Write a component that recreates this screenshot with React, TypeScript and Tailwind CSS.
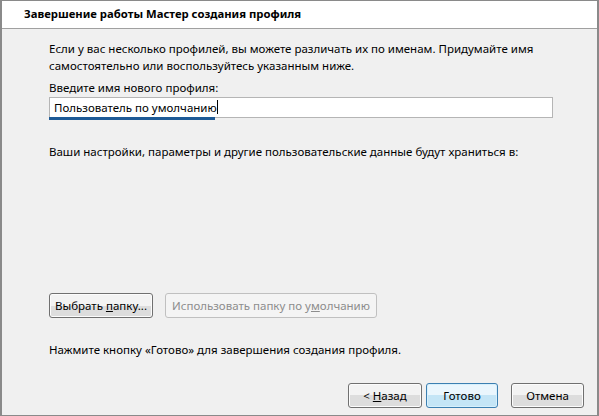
export default function App() {
  const font = { fontFamily: '"Noto Sans", "Open Sans", sans-serif' };
  const btn =
    "h-[25px] rounded-[3px] border border-[#707070] bg-gradient-to-b from-[#f3f3f3] from-50% to-[#dddddd] to-50% shadow-[inset_0_0_0_1px_#fcfcfc]";
  return (
    <div
      className="flex h-[416px] w-[599px] flex-col border-x-2 border-y border-[#8a8a8a] bg-[#f0f0f0] text-[11.5px] text-black"
      style={font}
    >
      <div className="flex h-[28px] shrink-0 items-center border-b border-[#a0a0a0] bg-white pl-[22px] text-[11.3px] font-bold">
        Завершение работы Мастер создания профиля
      </div>
      <div className="flex flex-1 flex-col pl-[47px] pr-[13px] pt-[11px]">
        <p className="whitespace-nowrap leading-[17px]">
          Если у вас несколько профилей, вы можете различать их по именам. Придумайте имя
          <br />
          самостоятельно или воспользуйтесь указанным ниже.
        </p>
        <p className="mt-[5px] leading-[17px]">
          Вве<span className="underline">д</span>ите имя нового профиля:
        </p>
        <div className="relative mt-px h-[21px] w-[504px] border border-[#b5b5b5] bg-white pl-[4px] leading-[19px]">
          Пользователь по умолчанию<span className="inline-block h-[14px] w-px translate-y-[2px] bg-black" />
          <div className="absolute -bottom-[3px] -left-px h-[3px] w-[166px] bg-[#1e5a96]" />
        </div>
        <p className="mt-[25px] leading-[17px]">
          Ваши настройки, параметры и другие пользовательские данные будут храниться в:
        </p>
        <div className="mt-[133px] flex gap-[12px]">
          <button className={`${btn} w-[104px]`}>
            Выбрать <span className="underline">п</span>апку...
          </button>
          <button className="h-[25px] w-[212px] rounded-[3px] border border-[#c0c0c0] bg-[#f4f4f4] text-[#8d8d8d]">
            Использовать папку по у<span className="underline">м</span>олчанию
          </button>
        </div>
        <p className="mt-[23px] leading-[17px]">
          Нажмите кнопку «Готово» для завершения создания профиля.
        </p>
        <div className="mt-[25px] flex justify-end gap-[4px]">
          <button className={`${btn} w-[74px]`}>
            &lt; <span className="underline">Н</span>азад
          </button>
          <button className="mr-[9px] h-[25px] w-[72px] rounded-[3px] border border-[#3c7fb1] bg-gradient-to-b from-[#eaf6fd] from-50% to-[#c4e5f6] to-50% shadow-[inset_0_0_0_1px_#d7f0fc]">
            Готово
          </button>
          <button className={`${btn} w-[73px]`}>Отмена</button>
        </div>
      </div>
    </div>
  );
}
